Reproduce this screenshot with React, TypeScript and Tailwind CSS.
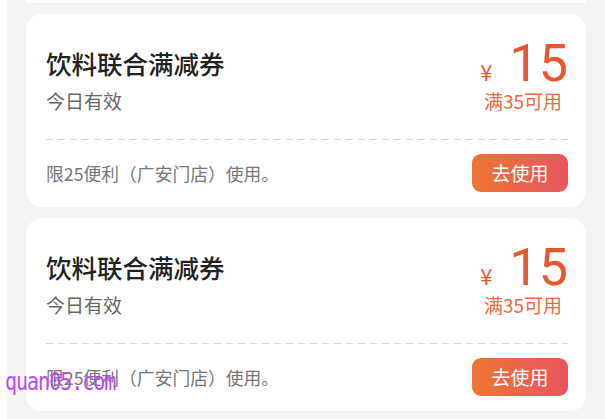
import React from 'react';

type Coupon = {
  title: string;
  valid: string;
  amount: number;
  threshold: string;
  note: string;
};

const coupons: Coupon[] = [
  { title: '饮料联合满减券', valid: '今日有效', amount: 15, threshold: '满35可用', note: '限25便利（广安门店）使用。' },
  { title: '饮料联合满减券', valid: '今日有效', amount: 15, threshold: '满35可用', note: '限25便利（广安门店）使用。' },
];

const CouponCard: React.FC<{ coupon: Coupon }> = ({ coupon }) => (
  <div className="bg-white rounded-[16px] pl-5 pr-[18px] pt-[20px] pb-[15px]">
    {/* 上半部分：名称与金额 */}
    <div className="flex items-start justify-between">
      <div className="pt-[14px]">
        <div className="text-[25.5px] leading-[30px] font-medium text-[#222222]">{coupon.title}</div>
        <div className="mt-[10px] text-[19px] leading-[26px] text-[#666666]">{coupon.valid}</div>
      </div>
      <div className="mt-[4px] flex flex-col items-end">
        <div className="flex items-baseline text-[#e8582f]">
          <span className="text-[22px] mr-[17px]">¥</span>
          <span className="text-[52px] leading-[52px] font-['Roboto','Noto_Sans',sans-serif]">{coupon.amount}</span>
        </div>
        <div className="-mt-[2px] pr-[6px] text-[19px] leading-[26px] text-[#ec6a44]">{coupon.threshold}</div>
      </div>
    </div>

    {/* 虚线分隔 */}
    <div className="mt-[25px] h-[1px] bg-[linear-gradient(to_right,#d6d6d6_55%,transparent_55%)] bg-[length:12px_1px]" />

    {/* 底部：使用说明与按钮 */}
    <div className="mt-[14px] flex items-center justify-between">
      <span className="text-[17.8px] text-[#777777]">{coupon.note}</span>
      <button className="h-[38px] w-[96px] rounded-[9px] bg-[linear-gradient(to_right,#ec7634,#e9545f)] text-[19px] text-white">
        去使用
      </button>
    </div>
  </div>
);

const App: React.FC = () => {
  return (
    <div className="relative w-[605px] h-[419px] overflow-hidden bg-white font-['Noto_Sans_CJK_SC',sans-serif]">
      <div className="ml-[7px] h-full bg-[#f4f4f4] px-[19px]">
        <div className="flex flex-col gap-[11px]">
          {/* 上一张券的底部 */}
          <div className="h-[3px] bg-white rounded-b-[16px]" />
          {coupons.map((c, i) => (
            <CouponCard key={i} coupon={c} />
          ))}
        </div>
      </div>

      {/* 水印 */}
      <span className="absolute left-[5px] top-[370px] origin-center scale-y-[1.2] text-[20px] leading-[24px] text-[#b84cf2] font-['DejaVu_Sans_Mono',monospace] tracking-[-1px]">
        quan05.com
      </span>
    </div>
  );
};

export default App;
